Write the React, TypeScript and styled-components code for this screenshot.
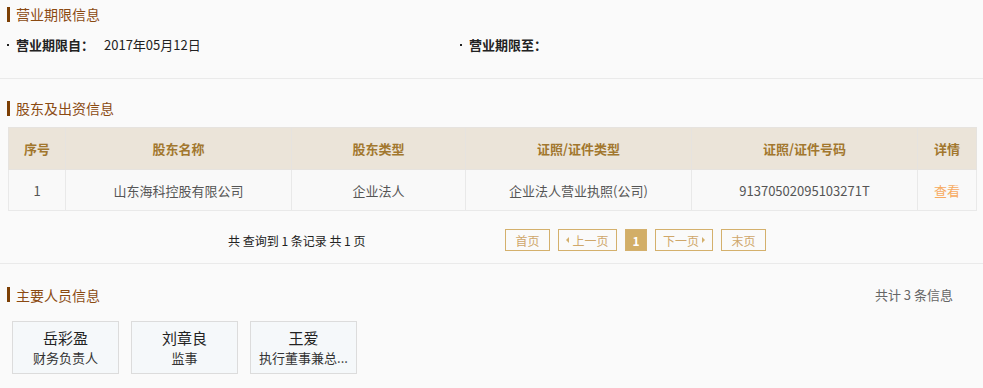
import React from "react";
import styled, { createGlobalStyle } from "styled-components";

const GlobalStyle = createGlobalStyle`
  html, body {
    margin: 0;
    padding: 0;
    background: #fafafa;
    font-family: "Noto Sans CJK SC", "Liberation Sans", sans-serif;
    color: #333;
  }
`;

const Page = styled.div`
  width: 983px;
  height: 388px;
  overflow: hidden;
  background: #fafafa;
`;

const Section = styled.section<{ $top: number; $height: number; $divider?: boolean }>`
  box-sizing: border-box;
  height: ${(p) => p.$height}px;
  padding: ${(p) => p.$top}px 13px 0 7px;
  border-bottom: ${(p) => (p.$divider ? "1px solid #eaeaea" : "none")};
`;

const TitleRow = styled.div`
  display: flex;
  align-items: center;
  justify-content: space-between;
`;

const Title = styled.h3`
  margin: 0;
  display: flex;
  align-items: center;
  gap: 6px;
  font-size: 14px;
  line-height: 16px;
  font-weight: normal;
  color: #8b4a12;

  &::before {
    content: "";
    display: block;
    width: 3px;
    height: 15px;
    background: #7c3f04;
  }
`;

const Count = styled.span`
  font-size: 13px;
  color: #666;
  margin-right: 17px;
`;

const InfoRow = styled.div`
  display: flex;
  margin-top: 13px;
  font-size: 13px;
  line-height: 20px;
`;

const InfoItem = styled.div`
  display: flex;
  align-items: center;
  width: 453px;
`;

const Label = styled.span`
  display: flex;
  align-items: center;
  font-weight: bold;
  color: #222;
  width: 97px;

  &::before {
    content: "";
    display: block;
    width: 2px;
    height: 2px;
    background: #222;
    margin-right: 7px;
  }
`;

const Value = styled.span`
  color: #222;
`;

const Table = styled.table`
  margin-top: 11px;
  margin-left: 1px;
  width: 962px;
  border-collapse: collapse;
  font-size: 13px;
  table-layout: fixed;
`;

const Th = styled.th<{ $w: number }>`
  width: ${(p) => p.$w}px;
  height: 41px;
  padding: 0;
  background: #ebe4d9;
  color: #a2772e;
  font-weight: bold;
  border: 1px solid #e6e3df;
  text-align: center;
`;

const Td = styled.td<{ $link?: boolean }>`
  height: 40px;
  padding: 0;
  background: #f9f9f9;
  border: 1px solid #e9e9e9;
  text-align: center;
  color: ${(p) => (p.$link ? "#f7aa60" : "#555")};
`;

const Pager = styled.div`
  display: flex;
  align-items: center;
  margin-top: 18px;
  padding-left: 221px;
  height: 22px;
`;

const PagerText = styled.span`
  font-size: 12px;
  color: #222;
  width: 277px;
`;

const PageButtons = styled.div`
  display: flex;
  gap: 8px;
`;

const PageButton = styled.span<{ $active?: boolean; $w: number }>`
  box-sizing: border-box;
  width: ${(p) => p.$w}px;
  height: 22px;
  display: flex;
  align-items: center;
  justify-content: center;
  gap: 3px;
  font-size: 12px;
  border: 1px solid #d4b06c;
  background: ${(p) => (p.$active ? "#d2ae67" : "#fafafa")};
  color: ${(p) => (p.$active ? "#fff" : "#cfa76a")};
  font-weight: ${(p) => (p.$active ? "bold" : "normal")};
`;

const Arrow = styled.span<{ $dir: "left" | "right" }>`
  width: 0;
  height: 0;
  border-top: 3px solid transparent;
  border-bottom: 3px solid transparent;
  ${(p) =>
    p.$dir === "left"
      ? "border-right: 3px solid #d4b06c;"
      : "border-left: 3px solid #d4b06c;"}
`;

const Cards = styled.div`
  display: flex;
  gap: 12px;
  margin-top: 17px;
  padding-left: 5px;
`;

const Card = styled.div`
  box-sizing: border-box;
  width: 107px;
  height: 53px;
  border: 1px solid #dcdcdc;
  background: #f5f8fa;
  display: flex;
  flex-direction: column;
  align-items: center;
  justify-content: center;
`;

const Name = styled.div`
  font-size: 15px;
  line-height: 20px;
  color: #222;
`;

const Role = styled.div`
  font-size: 13px;
  line-height: 19px;
  color: #333;
  white-space: nowrap;
`;

const columns = [
  { title: "序号", w: 56 },
  { title: "股东名称", w: 225 },
  { title: "股东类型", w: 173 },
  { title: "证照/证件类型", w: 225 },
  { title: "证照/证件号码", w: 225 },
  { title: "详情", w: 58 },
];

const people = [
  { name: "岳彩盈", role: "财务负责人" },
  { name: "刘章良", role: "监事" },
  { name: "王爱", role: "执行董事兼总..." },
];

export default function App(): JSX.Element {
  return (
    <Page>
      <GlobalStyle />
      <Section $top={6} $height={79} $divider>
        <Title>营业期限信息</Title>
        <InfoRow>
          <InfoItem>
            <Label>营业期限自：</Label>
            <Value>2017年05月12日</Value>
          </InfoItem>
          <InfoItem>
            <Label>营业期限至：</Label>
            <Value></Value>
          </InfoItem>
        </InfoRow>
      </Section>

      <Section $top={21} $height={185} $divider>
        <Title>股东及出资信息</Title>
        <Table>
          <thead>
            <tr>
              {columns.map((c) => (
                <Th key={c.title} $w={c.w}>
                  {c.title}
                </Th>
              ))}
            </tr>
          </thead>
          <tbody>
            <tr>
              <Td>1</Td>
              <Td>山东海科控股有限公司</Td>
              <Td>企业法人</Td>
              <Td>企业法人营业执照(公司)</Td>
              <Td>91370502095103271T</Td>
              <Td $link>查看</Td>
            </tr>
          </tbody>
        </Table>
        <Pager>
          <PagerText>共 查询到 1 条记录 共 1 页</PagerText>
          <PageButtons>
            <PageButton $w={45}>首页</PageButton>
            <PageButton $w={59}>
              <Arrow $dir="left" />
              上一页
            </PageButton>
            <PageButton $w={22} $active>
              1
            </PageButton>
            <PageButton $w={58}>
              下一页
              <Arrow $dir="right" />
            </PageButton>
            <PageButton $w={45}>末页</PageButton>
          </PageButtons>
        </Pager>
      </Section>

      <Section $top={21} $height={124}>
        <TitleRow>
          <Title>主要人员信息</Title>
          <Count>共计 3 条信息</Count>
        </TitleRow>
        <Cards>
          {people.map((p) => (
            <Card key={p.name}>
              <Name>{p.name}</Name>
              <Role>{p.role}</Role>
            </Card>
          ))}
        </Cards>
      </Section>
    </Page>
  );
}
